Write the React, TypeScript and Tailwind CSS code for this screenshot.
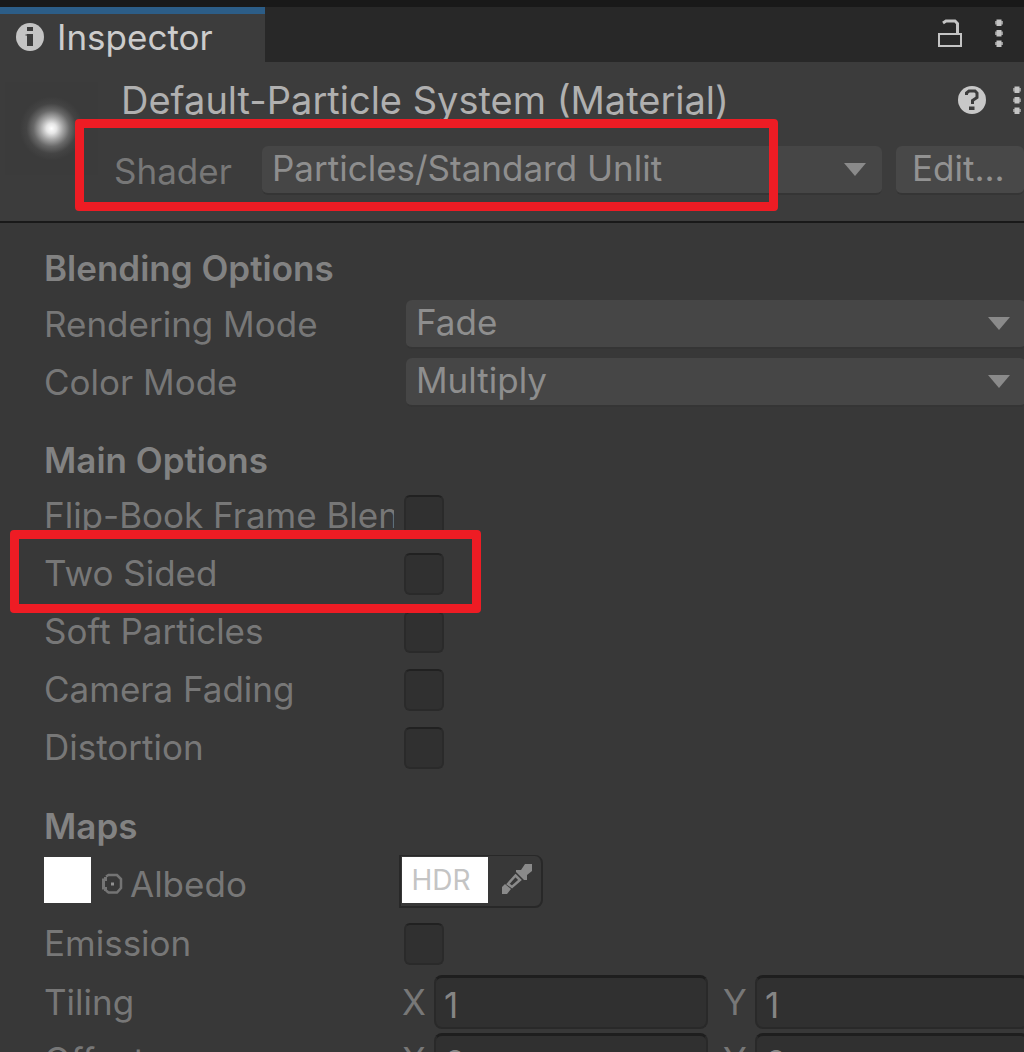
import { useId, useState } from "react";
import type { ReactNode } from "react";

function InfoIcon() {
  return (
    <svg viewBox="0 0 28 28" className="size-7 shrink-0" aria-hidden="true">
      <circle cx="14" cy="14" r="14" fill="#c4c4c4" />
      <path d="M11 4h6v4h-6zM11 11h6v12h-6z" fill="#3c3c3c" />
      <path d="M9.500 11H11v2H9.500z" fill="#777777" />
    </svg>
  );
}

function HelpIcon() {
  return (
    <svg viewBox="0 0 28 28" className="size-7" aria-hidden="true">
      <circle cx="14" cy="14" r="14" fill="#c8c8c8" />
      <path d="M8.500 9V7L11 5H17L19 7V11.500L14.500 14.500V18" fill="none" stroke="#3c3c3c" strokeWidth="3" />
      <path d="M11 20.500h5.500V24H11z" fill="#3c3c3c" />
    </svg>
  );
}

function LockIcon() {
  return (
    <svg viewBox="0 0 24 28" className="h-7 w-6" fill="none" stroke="#c4c4c4" strokeWidth="2" aria-hidden="true">
      <path d="M1 15h22v12H1z" />
      <path d="M5 4L8 2H17L19.500 4.500V14" strokeWidth="3" />
    </svg>
  );
}

function KebabIcon() {
  return (
    <svg viewBox="0 0 10 28" className="h-7 w-[10px]" aria-hidden="true">
      <path d="M1 2h8v3.500H1zM1 12.500h8V16H1zM1 23h8v3H1z" fill="#949494" />
      <path d="M2.500 0.500h5V7h-5zM2.500 11h5v6.500h-5zM2.500 21.500h5V28h-5z" fill="#c4c4c4" />
    </svg>
  );
}

function PickerIcon() {
  return (
    <svg viewBox="0 0 30 30" className="size-[30px]" aria-hidden="true">
      <path d="M23 0h7v7l-5 4v5h-3l-8-8V6h5z" fill="#8a8a8a" />
      <path d="M13.500 11.500l4.500 4.500-8 7-4-3z" fill="none" stroke="#8a8a8a" strokeWidth="2.500" />
      <path d="M0 30v-7l3-3 6 5-4 5z" fill="#8a8a8a" />
    </svg>
  );
}

function TargetIcon() {
  return (
    <svg viewBox="0 0 22 22" className="size-[22px]" aria-hidden="true">
      <path d="M5 3.500L7.500 2H16L20 6V15L16 19.500H7.500L5 17.500" fill="none" stroke="#747474" strokeWidth="2.500" />
      <path d="M2.500 5.500v11M4.500 4v4M4.500 14v4" stroke="#747474" strokeWidth="3" />
      <path d="M10 9.500h3v3h-3z" fill="#909090" />
    </svg>
  );
}

function Dropdown({ id, value, className }: { id: string; value: string; className: string }) {
  return (
    <div className={`relative ${className}`}>
      <select
        id={id}
        defaultValue={value}
        className="block h-[49px] w-full appearance-none rounded-md border-b-2 border-[#353535] bg-[#464646] pr-12 pb-1 pl-[10px] text-[#8e8e8e] outline-none"
      >
        <option>{value}</option>
      </select>
      <svg viewBox="0 0 22 13" className="pointer-events-none absolute top-[17px] right-4 h-[13px] w-[22px]" aria-hidden="true">
        <path d="M0 0h22L11 13z" fill="#8a8a8a" />
      </svg>
    </div>
  );
}

function Section({ title, children }: { title: string; children: ReactNode }) {
  return (
    <section className="mb-[22px]">
      <h2 className="flex h-[54px] items-center font-semibold text-[#828282]">{title}</h2>
      {children}
    </section>
  );
}

function SelectRow({ label, value }: { label: string; value: string }) {
  const id = useId();
  return (
    <div className="flex h-[58px] items-center">
      <label htmlFor={id} className="w-[362px] shrink-0">
        {label}
      </label>
      <Dropdown id={id} value={value} className="-mr-[2px] flex-1" />
    </div>
  );
}

function ToggleRow({ label, marked = false }: { label: string; marked?: boolean }) {
  const id = useId();
  return (
    <div className="relative flex h-[58px] items-center">
      <label htmlFor={id} className="mr-[10px] w-[350px] shrink-0 overflow-hidden pb-[2px] whitespace-nowrap">
        {label}
      </label>
      <input
        id={id}
        type="checkbox"
        className="h-[42px] w-10 shrink-0 appearance-none rounded-md border-2 border-[#2a2a2a] border-t-[#212121] bg-[#303030] checked:bg-[#5a5a5a]"
      />
      {marked && (
        <div className="pointer-events-none absolute -top-[15px] -left-[34px] z-10 h-[83px] w-[471px] rounded-sm border-9 border-[#ee1c24]" />
      )}
    </div>
  );
}

function AxisField({ name, axis, value }: { name: string; axis: string; value: string }) {
  const id = useId();
  const [text, setText] = useState(value);
  return (
    <div className="flex w-[306px] shrink-0 items-center">
      <label htmlFor={id} className="w-8 shrink-0">
        {axis}
      </label>
      <input
        id={id}
        aria-label={`${name} ${axis}`}
        value={text}
        onChange={(event) => setText(event.target.value)}
        className="h-[54px] min-w-0 flex-1 rounded-lg border-2 border-t-3 border-[#292929] border-t-[#1e1e1e] bg-[#303030] px-2 pt-1 text-[#858585] outline-none"
      />
    </div>
  );
}

function VectorRow({ label, value }: { label: string; value: string }) {
  return (
    <div className="flex h-[58px] items-center" role="group" aria-label={label}>
      <span className="w-[358px] shrink-0">{label}</span>
      <div className="flex gap-[15px]">
        <AxisField name={label} axis="X" value={value} />
        <AxisField name={label} axis="Y" value={value} />
      </div>
    </div>
  );
}

export default function App() {
  return (
    <div className="flex h-screen flex-col overflow-hidden bg-[#383838] font-['Inter',sans-serif] text-[35px] leading-[44px] text-[#777777]">
      <div className="flex h-[62px] shrink-0 items-stretch justify-between border-t-7 border-[#191919] bg-[#282828]">
        <button type="button" className="flex w-[265px] items-center gap-[13px] border-t-7 border-[#2c5d87] bg-[#3c3c3c] pb-[2px] pl-4 text-[#cccccc]">
          <InfoIcon />
          Inspector
        </button>
        <div className="flex items-center gap-8 pr-5 pb-1">
          <button type="button" aria-label="Lock inspector">
            <LockIcon />
          </button>
          <button type="button" aria-label="Tab menu">
            <KebabIcon />
          </button>
        </div>
      </div>

      <header className="relative flex h-[161px] shrink-0 border-b-2 border-[#191919] bg-[#3c3c3c]">
        <div className="mt-5 ml-[5px] size-[93px] shrink-0 bg-[#3b3b3b] bg-[radial-gradient(circle_at_center,#ffffff_0px,#e6e6e6_5px,#a8a8a8_11px,#686868_18px,#444444_25px,#3b3b3b_32px)]" />
        <div className="min-w-0 flex-1">
          <div className="mt-4 flex h-[44px] items-center justify-between pr-[2px] pl-[23px] text-[#b0b0b0]">
            <h1 className="text-[38px] whitespace-nowrap">Default-Particle System (Material)</h1>
            <div className="flex gap-[26px]">
              <button type="button" aria-label="Help">
                <HelpIcon />
              </button>
              <button type="button" aria-label="Material menu">
                <KebabIcon />
              </button>
            </div>
          </div>
          <div className="mt-6 flex h-[49px] items-center pl-4">
            <label htmlFor="shader" className="w-[148px] shrink-0">
              Shader
            </label>
            <Dropdown id="shader" value="Particles/Standard Unlit" className="flex-1" />
            <button
              type="button"
              className="ml-[14px] h-[49px] w-32 shrink-0 rounded-md border-b-2 border-[#353535] bg-[#484848] pb-1 pl-4 text-left text-[#929292]"
            >
              Edit...
            </button>
          </div>
        </div>
        <div className="pointer-events-none absolute top-[57px] left-[75px] h-[92px] w-[703px] rounded-sm border-9 border-[#ee1c24]" />
      </header>

      <main className="pt-[18px] pl-11">
        <Section title="Blending Options">
          <SelectRow label="Rendering Mode" value="Fade" />
          <SelectRow label="Color Mode" value="Multiply" />
        </Section>

        <Section title="Main Options">
          <ToggleRow label="Flip-Book Frame Blending" />
          <ToggleRow label="Two Sided" marked />
          <ToggleRow label="Soft Particles" />
          <ToggleRow label="Camera Fading" />
          <ToggleRow label="Distortion" />
        </Section>

        <Section title="Maps">
          <div className="flex h-[62px] items-center">
            <button type="button" aria-label="Albedo texture" className="mb-2 h-[46px] w-[47px] bg-white" />
            <button type="button" aria-label="Select texture" className="ml-[10px]">
              <TargetIcon />
            </button>
            <span className="ml-[7px] w-[269px]">Albedo</span>
            <div className="mb-[6px] flex h-[53px] w-[144px] rounded-r-lg border-2 border-t-1 border-[#282828]">
              <button type="button" aria-label="Albedo HDR color" className="mt-px mb-[3px] ml-px w-[86px] bg-white pr-2 text-center text-[28px] text-[#c4c4c4]">
                HDR
              </button>
              <button type="button" aria-label="Pick color" className="flex flex-1 items-center justify-center pr-1 pb-1 pl-2">
                <PickerIcon />
              </button>
            </div>
          </div>
          <ToggleRow label="Emission" />
          <VectorRow label="Tiling" value="1" />
          <VectorRow label="Offset" value="0" />
        </Section>
      </main>
    </div>
  );
}
